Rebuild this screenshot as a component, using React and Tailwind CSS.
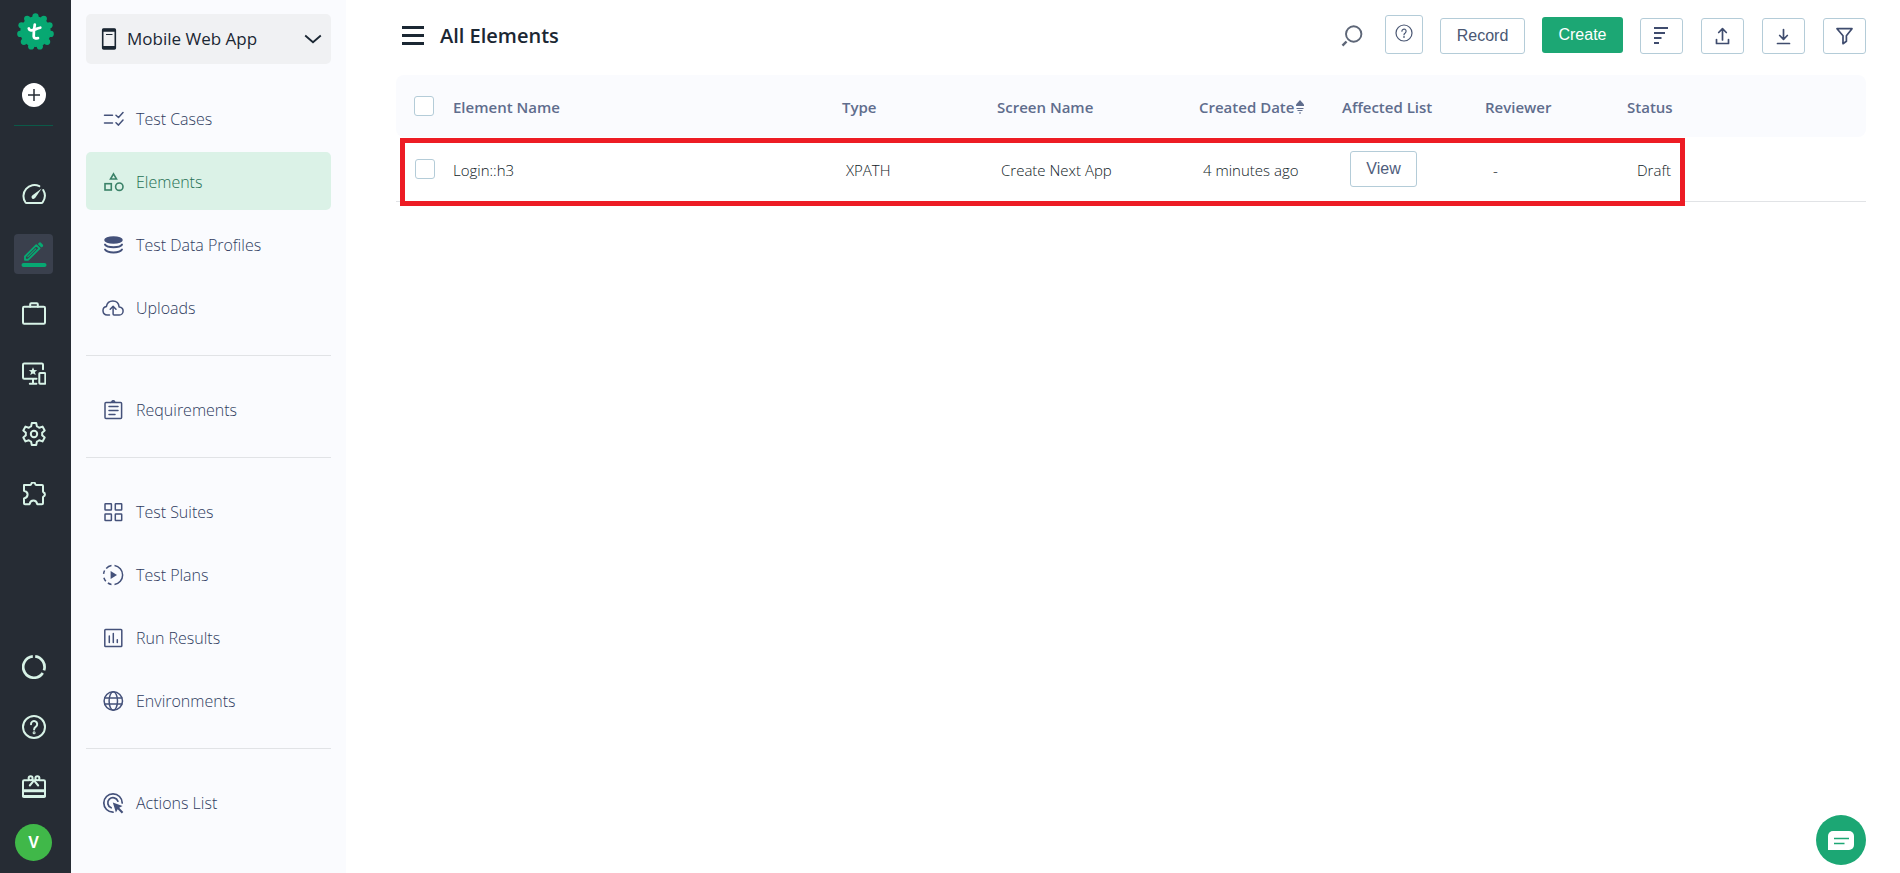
import React from "react";

function Icon({ size = "size-6", box = 24, sw = 2, tone = "", children }) {
  return (
    <svg
      viewBox={`0 0 ${box} ${box}`}
      className={`${size} ${tone} shrink-0`}
      fill="none"
      stroke="currentColor"
      strokeWidth={sw}
      strokeLinecap="round"
      strokeLinejoin="round"
      aria-hidden="true"
    >
      {children}
    </svg>
  );
}

/* ---------- brand ---------- */

const lobes = Array.from({ length: 11 }, (_, i) => {
  const a = (i / 11) * Math.PI * 2;
  return { x: 18.5 + 15.4 * Math.sin(a), y: 18.7 - 15.4 * Math.cos(a) };
});

function Logo() {
  return (
    <svg viewBox="0 0 37 37" className="size-[37px]" aria-hidden="true">
      <g fill="#07a872">
        <circle cx="18.500" cy="18.700" r="15.200" />
        {lobes.map((p, i) => (
          <circle key={i} cx={p.x} cy={p.y} r="3.100" />
        ))}
      </g>
      <g fill="none" stroke="#fff" strokeWidth="2.7" strokeLinecap="round" strokeLinejoin="round">
        <path d="M17.800 11.600c-.8 4.600-1.200 8.400-1.100 11.900 0 1.900 2.100 1.900 4.300 1.700" />
        <path d="M11.800 15.500c.5 1.600 1.300 2.200 2.800 1.900 2.900-.6 4.900-1.700 8.700-2.700" />
      </g>
    </svg>
  );
}

/* ---------- rail icons ---------- */

const GaugeIcon = () => (
  <Icon>
    <path d="M17.300 4.200A11 11 0 0 0 3.400 20.300c.3.400.7.600 1.200.600h14.800c.5 0 .9-.2 1.200-.6a11 11 0 0 0 .6-12.200" />
    <path d="M19.600 6.500l-6.300 9.300c-.9 1.300-2.300 1.400-3.200.600-.9-.9-.8-2.300.4-3.200z" fill="currentColor" stroke="none" />
  </Icon>
);

const EditIcon = () => (
  <svg viewBox="0 0 26 26" className="size-[26px]" fill="none" stroke="currentColor" aria-hidden="true">
    <path d="M4 18.700v-3.200L15.300 4.200l3.200 3.200L7.200 18.700z" strokeWidth="1.900" strokeLinejoin="round" />
    <path d="M6.500 16.200l8.600-8.600" strokeWidth="1.200" />
    <path d="M16.800 3l1.500-1.400q.7-.6 1.400 0l2.200 2.200q.6.700 0 1.400L20.300 6.500z" fill="currentColor" stroke="none" />
    <rect x="0.500" y="22" width="25" height="4" rx="2" fill="currentColor" stroke="none" />
  </svg>
);

const BriefcaseIcon = () => (
  <Icon>
    <rect x="1" y="4.700" width="22" height="17" rx="1.200" />
    <path d="M8.200 4.700V2.300q0-1 1-1h5.600q1 0 1 1v2.400" />
  </Icon>
);

const DevicesIcon = () => (
  <Icon>
    <path d="M14.500 16.700H2.200q-1.200 0-1.200-1.200V2.700q0-1.200 1.200-1.200h17.600q1.200 0 1.200 1.200v4.500" />
    <path d="M11 17v4.500M7.800 21.800h6.600" />
    <rect x="17.300" y="11" width="6" height="10.800" rx="0.800" />
    <path
      d="M11 5.200l1.200 2.800 3 .2-2.300 1.900.8 2.900L11 11.400 8.300 13l.8-2.900-2.300-1.900 3-.2z"
      fill="currentColor"
      stroke="none"
    />
  </Icon>
);

const GearIcon = () => (
  <Icon>
    <path d="M9.800 1h4.400l.7 3.400q1.300.5 2.300 1.300l3.300-1.100 2.200 3.800-2.600 2.300q.3 1.300 0 2.600l2.600 2.300-2.200 3.800-3.300-1.100q-1 .8-2.300 1.300L14.200 23H9.800l-.7-3.400q-1.300-.5-2.300-1.300l-3.300 1.100-2.200-3.800 2.600-2.300q-.3-1.300 0-2.600L1.300 8.400l2.200-3.800 3.300 1.100q1-.8 2.300-1.300z" />
    <circle cx="12" cy="12" r="3.200" />
  </Icon>
);

const PuzzleIcon = () => (
  <Icon>
    <path d="M2 3h6.200c.5 0 .9-.3 1-.9a2.100 2.100 0 0 1 4.100 0c.1.600.5.900 1 .9H20q1 0 1 1v5.500c0 .5.300.8.700 1a2.100 2.100 0 0 1 0 3.800c-.4.200-.7.500-.7 1v5.900q0 1-1 1h-4.700c-.6-2.600-1.900-3.700-3.900-3.700s-3.300 1.100-3.900 3.700H3q-1 0-1-1v-4.700c2.500-.6 3.600-2 3.600-3.900S4.500 9.400 2 8.800z" />
  </Icon>
);

const UsageIcon = () => (
  <Icon sw={2.700}>
    <g strokeLinecap="butt">
      <path d="M13.200 1.400a10.700 10.700 0 0 1 8.800 14" />
      <path d="M20.800 18A10.700 10.700 0 1 1 10.800 1.400" />
    </g>
  </Icon>
);

const HelpIcon = () => (
  <Icon>
    <circle cx="12" cy="12" r="11" />
    <path d="M9 9.200a3.100 3.100 0 1 1 4.900 2.400c-1.200.8-1.800 1.500-1.800 3" />
    <circle cx="12.100" cy="17.800" r="0.500" />
  </Icon>
);

const GiftIcon = () => (
  <Icon>
    <path d="M7 5.300H2.200Q1 5.300 1 6.500v14.300Q1 22 2.200 22h19.600q1.200 0 1.200-1.200V6.500q0-1.200-1.200-1.200H17" />
    <path d="M1 15.700h22" strokeWidth="3" />
    <path d="M1.500 21.300h21" strokeWidth="2.400" />
    <circle cx="8.600" cy="3.200" r="2" />
    <circle cx="15.400" cy="3.200" r="2" />
    <path d="M12 5.300l-4.200 5.200M12 5.300l4.200 5.200M10.400 5.300h3.200" />
  </Icon>
);

/* ---------- sidebar icons (22px) ---------- */

function Side({ children, sw = 1.5, tone = "text-[#44517a]" }) {
  return (
    <Icon size="size-[22px]" box={22} sw={sw} tone={tone}>
      {children}
    </Icon>
  );
}

const CasesIcon = () => (
  <Side>
    <path d="M2.500 7.200h8M2.500 15h8" />
    <path d="M14 7.200l2.500 2.300 4.500-5M14 14.800l2.500 2.300 4.500-5" />
  </Side>
);
const ElementsIcon = () => (
  <Side sw={1.600} tone="text-[#3a8268]">
    <path d="M11.500 2.800l3 5.200h-6z" strokeLinejoin="miter" />
    <rect x="3" y="12.700" width="6.300" height="6.300" strokeLinejoin="miter" />
    <circle cx="17.300" cy="15.700" r="3.700" />
  </Side>
);
const DataIcon = () => (
  <Side sw={1.600}>
    <ellipse cx="11.500" cy="6" rx="9.300" ry="3.800" fill="currentColor" stroke="none" />
    <path
      d="M3 10.600c1.200 1.800 4.600 2.600 8.500 2.600s7.300-.8 8.500-2.600M3 15.600c1.200 1.900 4.600 2.900 8.500 2.900s7.300-1 8.500-2.900"
      strokeWidth="1.900"
    />
  </Side>
);
const UploadsIcon = () => (
  <Side>
    <path d="M7.500 18H5.200a4.300 4.300 0 0 1-.8-8.500C5 6 7.500 4 10.800 4c3.600 0 6 2.400 6.300 5.900 2.400.2 4 1.700 4 4S19.500 18 17.300 18H12q-.9 0-.9-.9V9.800" />
    <path d="M8.200 12.300l2.900-2.900 2.900 2.900" />
  </Side>
);
const RequirementsIcon = () => (
  <Side>
    <path d="M8.500 3.500H4q-1 0-1 1v14q0 1 1 1h14.600q1 0 1-1v-14q0-1-1-1h-4.300" />
    <path d="M8.500 3.500c.8 0 1.100-.3 1.300-.8a1.600 1.600 0 0 1 2.900 0c.2.500.5.800 1.300.8z" />
    <path d="M7 7.500h9M7 11.500h9M7 15.500h6" />
  </Side>
);
const SuitesIcon = () => (
  <Side>
    <rect x="3" y="2.700" width="6.400" height="6.400" rx="0.500" />
    <rect x="13.300" y="2.700" width="6.400" height="6.400" rx="0.500" />
    <rect x="3" y="13" width="6.400" height="6.400" rx="0.500" />
    <rect x="13.300" y="13" width="6.400" height="6.400" rx="0.500" />
  </Side>
);
const PlansIcon = () => (
  <Side>
    <path d="M12.500 1.600a9.500 9.500 0 0 1 0 18.800" strokeLinecap="butt" />
    <path
      d="M9.500 20.400a9.500 9.500 0 0 1-3.600-1.400M3.800 17.200a9.500 9.500 0 0 1-1.900-3.500M1.600 9.900a9.500 9.500 0 0 1 1-3.400M4.200 4.400a9.500 9.500 0 0 1 5.300-2.800"
      strokeLinecap="butt"
    />
    <path d="M8.600 7l6.400 4-6.400 4z" fill="currentColor" stroke="none" />
  </Side>
);
const ResultsIcon = () => (
  <Side>
    <rect x="2.800" y="2.500" width="17" height="17" rx="0.800" />
    <path d="M7.300 9v6.500M11.300 6.500v9M15.300 12.700v2.800" />
  </Side>
);
const GlobeIcon = () => (
  <Side>
    <circle cx="11.300" cy="11" r="9.200" />
    <ellipse cx="11.300" cy="11" rx="4.200" ry="9.200" />
    <path d="M2.700 8h17.200M2.700 14h17.200" />
  </Side>
);
const ActionsIcon = () => (
  <Side sw={1.700}>
    <path d="M11 20.200a9.200 9.200 0 1 1 9.200-9.200" />
    <path d="M9.200 15.800A5.200 5.200 0 1 1 15.900 9.200" />
    <path d="M10.800 10.500l9.700 3.400-3.300 1.900 4.100 4.100-1.500 1.500-4.100-4.100-1.800 3.200z" fill="currentColor" stroke="none" />
  </Side>
);

/* ---------- navigation data ---------- */

const railTop = [
  { label: "Dashboard", icon: GaugeIcon },
  { label: "Create Tests", icon: EditIcon, active: true },
  { label: "Projects", icon: BriefcaseIcon },
  { label: "Devices", icon: DevicesIcon },
  { label: "Settings", icon: GearIcon },
  { label: "Addons", icon: PuzzleIcon },
];

const railBottom = [
  { label: "Usage", icon: UsageIcon },
  { label: "Help", icon: HelpIcon },
  { label: "What's new", icon: GiftIcon },
];

const menuGroups = [
  [
    { label: "Test Cases", icon: CasesIcon },
    { label: "Elements", icon: ElementsIcon, active: true },
    { label: "Test Data Profiles", icon: DataIcon },
    { label: "Uploads", icon: UploadsIcon },
  ],
  [{ label: "Requirements", icon: RequirementsIcon }],
  [
    { label: "Test Suites", icon: SuitesIcon },
    { label: "Test Plans", icon: PlansIcon },
    { label: "Run Results", icon: ResultsIcon },
    { label: "Environments", icon: GlobeIcon },
  ],
  [{ label: "Actions List", icon: ActionsIcon }],
];

function RailLink({ item }) {
  const I = item.icon;
  return (
    <a
      href="#"
      aria-label={item.label}
      className={`flex h-10 w-[39px] items-center justify-center rounded ${
        item.active ? "bg-[#3a404d] text-[#07a872]" : "text-[#d8f3e7]"
      }`}
    >
      <I />
    </a>
  );
}

function Rail() {
  return (
    <nav className="flex w-[71px] shrink-0 flex-col items-center bg-[#262c34] pt-[13px] pr-1 pb-3">
      <a href="#" aria-label="Home" className="ml-[3px]">
        <Logo />
      </a>
      <button aria-label="Add" className="mt-[33px] flex size-6 items-center justify-center rounded-full bg-white text-[#262c34]">
        <svg viewBox="0 0 12 12" className="size-3" stroke="currentColor" strokeWidth="1.500" aria-hidden="true">
          <path d="M6 0v12M0 6h12" />
        </svg>
      </button>
      <div className="mt-[18px] h-px w-[39px] bg-[#0b5a48]" />
      <div className="mt-12 flex flex-col gap-5">
        {railTop.map((item) => (
          <RailLink key={item.label} item={item} />
        ))}
      </div>
      <div className="mt-auto flex flex-col gap-5">
        {railBottom.map((item) => (
          <RailLink key={item.label} item={item} />
        ))}
      </div>
      <button className="mt-[17px] flex size-[37px] items-center justify-center rounded-full bg-[#40b849] font-['Liberation_Sans',sans-serif] text-base font-bold text-white">
        V
      </button>
    </nav>
  );
}

function Sidebar() {
  return (
    <aside className="w-[275px] shrink-0 bg-[#fafbfe] px-[15px] pt-[14px]">
      <button className="flex h-[50px] w-full items-center rounded-[5px] bg-[#f0f1f3] pr-2 pl-[15px] text-[#1b2733]">
        <svg viewBox="0 0 16 22" className="h-[22px] w-4" fill="none" aria-hidden="true">
          <rect x="1.700" y="1" width="12.600" height="20" rx="1" stroke="currentColor" strokeWidth="1.600" />
          <path d="M1.500 2.200h13M1.500 19.400h13" stroke="currentColor" strokeWidth="3" />
          <path d="M5 6.500h6.500" stroke="currentColor" strokeWidth="1" />
        </svg>
        <span className="ml-2.5 flex-1 text-left text-[17px] font-medium">Mobile Web App</span>
        <svg viewBox="0 0 20 20" className="size-5" fill="none" stroke="currentColor" strokeWidth="1.800" aria-hidden="true">
          <path d="M2.200 6.500l7.800 6.700 7.800-6.700" />
        </svg>
      </button>
      <div className="mt-[25px]">
        {menuGroups.map((group, i) => (
          <div key={i} className={i ? "mt-[19px] border-t border-[#e1e3e6] pt-6" : ""}>
            <ul className="flex flex-col gap-[5px]">
              {group.map(({ label, icon: I, active }) => (
                <li key={label}>
                  <a
                    href="#"
                    className={`flex h-[58px] items-center gap-3 rounded-[5px] pt-px pl-4 text-base font-light ${
                      active ? "bg-[#dbf2e7] text-[#1f7054]" : "text-[#2f3c60]"
                    }`}
                  >
                    <I />
                    {label}
                  </a>
                </li>
              ))}
            </ul>
          </div>
        ))}
      </div>
    </aside>
  );
}

function ToolButton({ label, children }) {
  return (
    <button aria-label={label} className="flex h-9 w-[43px] items-center justify-center rounded-[3px] border border-[#b4ccd8] text-[#3f4c6e]">
      <Icon size="size-5" box={20} sw={1.700}>
        {children}
      </Icon>
    </button>
  );
}

function Toolbar() {
  return (
    <header className="flex h-[75px] items-start pt-[15px]">
      <button aria-label="Toggle menu" className="mt-[11px] ml-1.5 flex w-[22px] flex-col gap-[5px]">
        <span className="h-[3px] w-full bg-[#1b2733]" />
        <span className="h-[3px] w-full bg-[#1b2733]" />
        <span className="h-[3px] w-full bg-[#1b2733]" />
      </button>
      <h1 className="mt-1.5 ml-4 text-xl leading-[30px] font-semibold text-[#1b2733]">All Elements</h1>
      <div className="ml-auto flex items-start gap-[17px]">
        <button aria-label="Search" className="mt-[10px] mr-[5px] text-[#5d6677]">
          <svg viewBox="0 0 22 22" className="size-[22px]" fill="none" stroke="currentColor" aria-hidden="true">
            <circle cx="12.700" cy="9" r="7.700" strokeWidth="1.900" />
            <path d="M5.500 16.500l-4 4.200" strokeWidth="2.400" />
          </svg>
        </button>
        <button aria-label="Help" className="flex h-[39px] w-[38px] items-center justify-center rounded-[3px] border border-[#b4ccd8] pb-1 text-[#4a5773]">
          <svg viewBox="0 0 18 18" className="size-[18px]" fill="none" stroke="currentColor" strokeWidth="1.200" strokeLinecap="round" aria-hidden="true">
            <circle cx="9" cy="9" r="8" />
            <path d="M6.900 7.200a2.100 2.100 0 1 1 3.300 1.700c-.8.500-1.200 1-1.200 1.900" />
            <circle cx="9" cy="13" r="0.300" />
          </svg>
        </button>
        <button className="mt-[3px] h-9 w-[85px] rounded-[3px] border border-[#b4ccd8] font-['Liberation_Sans',sans-serif] text-base text-[#4a5773]">
          Record
        </button>
        <button className="mt-0.5 h-9 w-[81px] rounded-[3px] bg-[#1ca774] font-['Liberation_Sans',sans-serif] text-base text-white">
          Create
        </button>
        <div className="mt-[3px] flex gap-[18px]">
          <ToolButton label="Sort">
            <g strokeWidth="2" strokeLinecap="butt">
              <path d="M2 2h14M2 7h11M2 12h7.500M2 17h5" />
            </g>
          </ToolButton>
          <ToolButton label="Upload">
            <path d="M3.500 13.500v4h12v-4M9.500 14V3M5.700 6.500l3.800-3.800 3.800 3.800" />
          </ToolButton>
          <ToolButton label="Download">
            <path d="M3.500 17.500h12M9.500 3.500V13M5.700 9.500l3.800 3.800 3.800-3.800" />
          </ToolButton>
          <ToolButton label="Filter">
            <path d="M2 2.700h15l-5.600 7v5.500L8 17.700v-8z" />
          </ToolButton>
        </div>
      </div>
    </header>
  );
}

function Check({ label }) {
  return (
    <input
      type="checkbox"
      aria-label={label}
      className="block size-5 appearance-none rounded-[3px] border border-[#b4ccd8] bg-white"
    />
  );
}

function SortIcon() {
  return (
    <svg viewBox="0 0 8 14" className="ml-0.5 inline-block h-[14px] w-2 align-[-1px]" aria-hidden="true">
      <path d="M4 0L8 4.500V6H0V4.500z" fill="currentColor" />
      <path d="M.5 8.500h7M1.500 10.500h5M3 13h2" stroke="currentColor" strokeWidth="1" />
    </svg>
  );
}

const headings = ["Element Name", "Type", "Screen Name", "Created Date", "Affected List", "Reviewer", "Status"];

function ElementsTable() {
  return (
    <div className="relative">
      <table className="w-full table-fixed border-separate border-spacing-0 text-left text-[15px] whitespace-nowrap">
        <colgroup>
          <col className="w-[57px]" />
          <col />
          <col className="w-[155px]" />
          <col className="w-[202px]" />
          <col className="w-[143px]" />
          <col className="w-[143px]" />
          <col className="w-[142px]" />
          <col className="w-[239px]" />
        </colgroup>
        <thead>
          <tr className="h-[62px] text-[#5f6d8d]">
            <th className="rounded-l-lg bg-[#fafbfe] pl-[18px]">
              <Check label="Select all elements" />
            </th>
            {headings.map((h) => (
              <th key={h} className="bg-[#fafbfe] pt-0.5 font-semibold last:rounded-r-lg">
                {h}
                {h === "Created Date" && <SortIcon />}
              </th>
            ))}
          </tr>
        </thead>
        <tbody>
          <tr className="h-[65px] text-[#0f1a26] [&>td]:border-b [&>td]:border-[#e1e3e6] [&>td]:font-light">
            <td className="pl-[19px]">
              <Check label="Select Login::h3" />
            </td>
            <td className="pt-0.5">Login::h3</td>
            <td className="pt-0.5 pl-1">XPATH</td>
            <td className="pt-0.5 pl-1">Create Next App</td>
            <td className="pt-0.5 pl-1">4 minutes ago</td>
            <td className="pl-2">
              <button className="h-9 w-[67px] rounded-[3px] border border-[#b4ccd8] font-['Liberation_Sans',sans-serif] text-base font-normal text-[#4f5d7c]">
                View
              </button>
            </td>
            <td className="pt-0.5 pl-2">-</td>
            <td className="pt-0.5 pl-2.5">Draft</td>
          </tr>
        </tbody>
      </table>
      <div className="pointer-events-none absolute top-[63px] right-[181px] left-1 h-[68px] border-5 border-[#ed1c24]" />
    </div>
  );
}

export default function App() {
  return (
    <div className="flex min-h-screen bg-white font-['Open_Sans','Noto_Sans',sans-serif]">
      <Rail />
      <Sidebar />
      <main className="min-w-0 flex-1 pr-[34px] pl-[50px]">
        <Toolbar />
        <ElementsTable />
      </main>
      <button aria-label="Open chat" className="fixed right-[34px] bottom-2 flex size-[50px] items-center justify-center rounded-full bg-[#1ca774]">
        <svg viewBox="0 0 26 19" className="h-[19px] w-[26px]" aria-hidden="true">
          <path d="M5 0h16a5 5 0 0 1 5 5v9a5 5 0 0 1-5 5H0V5a5 5 0 0 1 5-5z" fill="#fff" />
          <path d="M6 7.500h15M6 12.500h10.500" stroke="#1ca774" strokeWidth="1.500" />
        </svg>
      </button>
    </div>
  );
}
